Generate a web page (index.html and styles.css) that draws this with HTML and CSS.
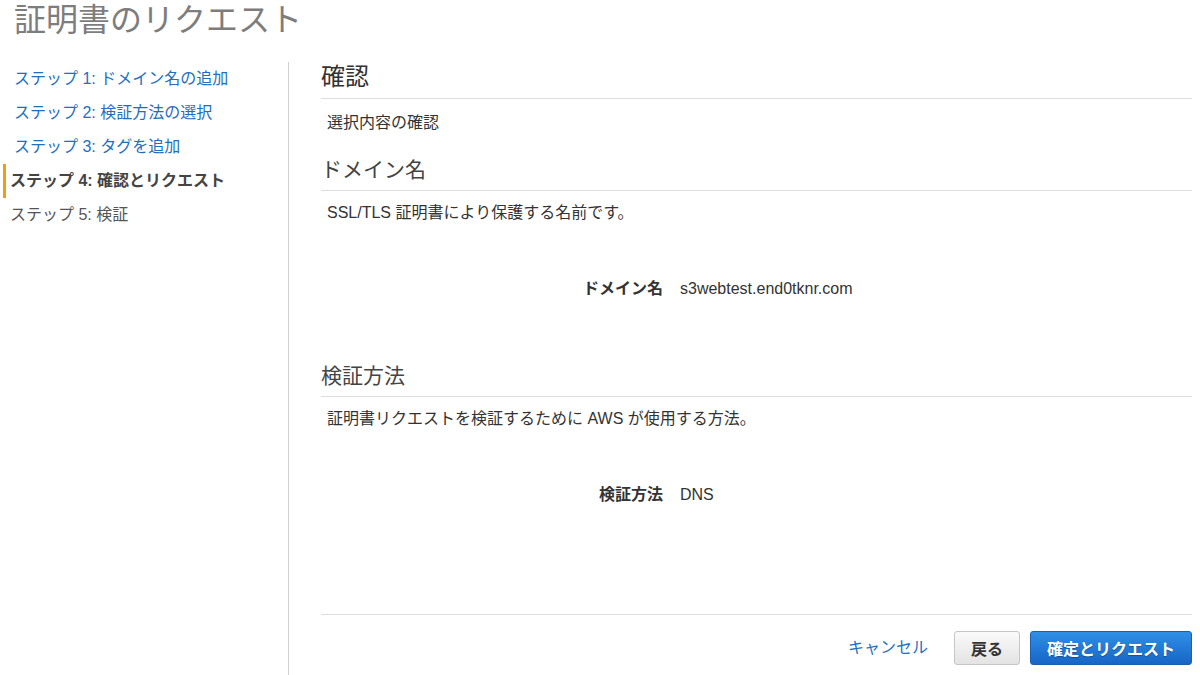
FILE: index.html
```html
<!DOCTYPE html>
<html lang="ja">
<head>
  <meta charset="UTF-8">
  <title>証明書のリクエスト</title>
  <link rel="stylesheet" href="styles.css">
</head>
<body>
  <h1 class="page-title">証明書のリクエスト</h1>

  <div class="layout">
    <!-- Wizard steps -->
    <ul class="steps">
      <li class="step link">ステップ 1: ドメイン名の追加</li>
      <li class="step link">ステップ 2: 検証方法の選択</li>
      <li class="step link">ステップ 3: タグを追加</li>
      <li class="step active">ステップ 4: 確認とリクエスト</li>
      <li class="step">ステップ 5: 検証</li>
    </ul>

    <!-- Review panel -->
    <div class="main">
      <h2 class="section-title big">確認</h2>
      <p class="desc first">選択内容の確認</p>

      <h3 class="section-title">ドメイン名</h3>
      <p class="desc">SSL/TLS 証明書により保護する名前です。</p>
      <div class="field">
        <span class="field-label">ドメイン名</span>
        <span class="field-value">s3webtest.end0tknr.com</span>
      </div>

      <h3 class="section-title">検証方法</h3>
      <p class="desc">証明書リクエストを検証するために AWS が使用する方法。</p>
      <div class="field">
        <span class="field-label">検証方法</span>
        <span class="field-value">DNS</span>
      </div>

      <div class="actions">
        <a class="cancel">キャンセル</a>
        <button class="btn">戻る</button>
        <button class="btn primary">確定とリクエスト</button>
      </div>
    </div>
  </div>
</body>
</html>
```

FILE: styles.css
```css
/* Reset + base */
* { margin:0; padding:0; box-sizing:border-box; }
body {
  background:#fff;
  color:#333;
  font-family:"Liberation Sans", "Noto Sans CJK JP", sans-serif;
  width:1200px; height:675px;
  overflow:hidden;
}

/* Page title */
.page-title {
  font-size:32px; font-weight:normal;
  color:#7d7d7d;
  line-height:40px;
  padding-left:14px;
  height:62px;
}

.layout {
  display:flex;
  height:613px;
}

/* Steps sidebar */
.steps {
  list-style:none;
  width:289px;
  border-right:1px solid #cfcfcf;
}
.step {
  font-size:16px;
  line-height:34px;
  padding-left:4px;
  color:#555;
  border-left:3px solid transparent;
  margin-left:3px;
  white-space:nowrap;
}
.step.link { color:#1e6fbf; padding-left:8px; }
.step.active {
  font-weight:bold; color:#444;
  border-left-color:#f39c12;
}

/* Main panel */
.main {
  margin-left:32px;
  width:871px;
  display:flex; flex-direction:column;
}
.section-title {
  font-weight:normal;
  font-size:21px;
  color:#444;
  line-height:28px;
  padding-bottom:6px;
  border-bottom:1px solid #ddd;
  margin-top:22px;
}
.section-title.big {
  font-size:24px; color:#333;
  line-height:30px;
  margin-top:0;
}
.desc {
  font-size:16px;
  line-height:22px;
  padding-left:6px;
  margin-top:11px;
}
.desc.first { margin-top:13px; }

.field {
  display:grid;
  grid-template-columns:342px 1fr;
  column-gap:17px;
  font-size:16px;
  line-height:22px;
  margin-top:54px;
  margin-bottom:40px;
}
.field-label { text-align:right; font-weight:bold; }

/* Footer buttons */
.actions {
  margin-top:auto;
  border-top:1px solid #ddd;
  padding-top:16px;
  height:61px;
  display:flex; justify-content:flex-end; align-items:flex-start;
}
.cancel {
  color:#1e6fbf;
  font-size:16px;
  line-height:34px;
  margin-right:26px;
}
.btn {
  height:34px;
  padding:0 16px;
  font-family:inherit;
  font-size:16px; font-weight:bold;
  color:#333;
  background:linear-gradient(#fafafa, #e3e3e3);
  border:1px solid #c6c6c6;
  border-radius:3px;
}
.btn.primary {
  margin-left:10px;
  width:162px;
  color:#fff;
  background:linear-gradient(#2f8fe6, #1766c6);
  border-color:#1a5fb0;
  text-shadow:0 1px 1px rgba(0,0,0,0.3);
}
```
